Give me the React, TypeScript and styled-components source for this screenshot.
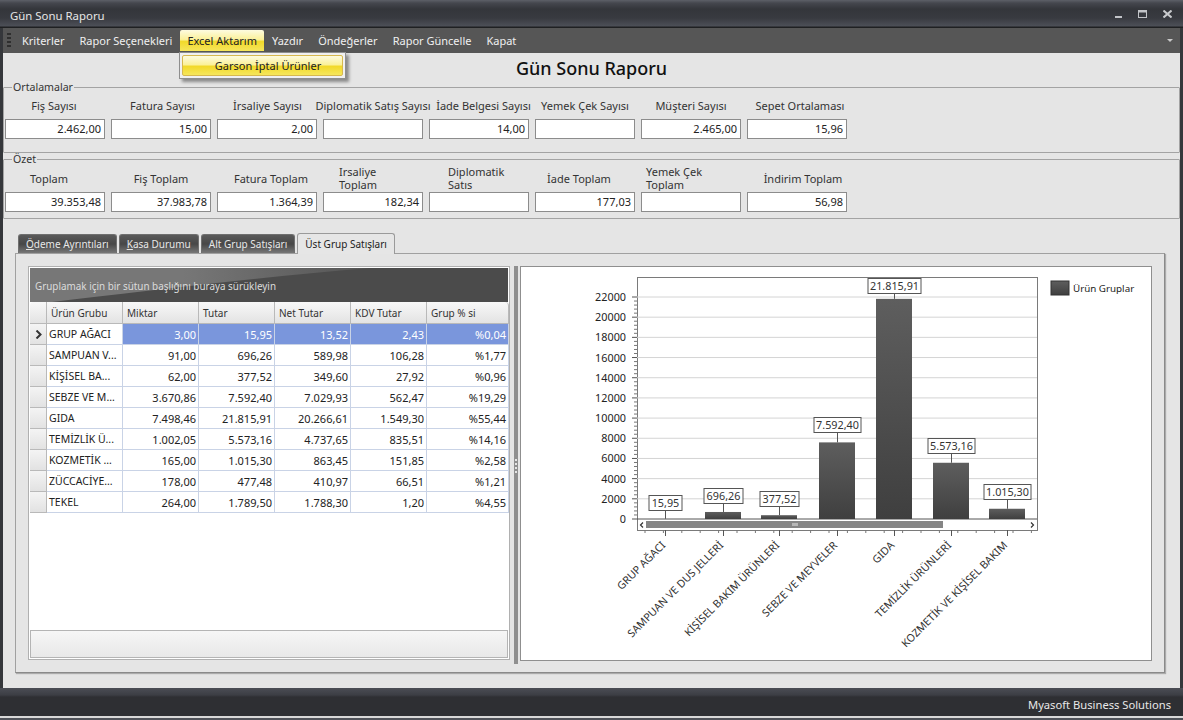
import React from "react";
import styled, { createGlobalStyle } from "styled-components";

const Global = createGlobalStyle`
  html, body { margin: 0; padding: 0; height: 100%; overflow: hidden; background: #2e2f33; }
  * { box-sizing: border-box; }
  #root { width: 1183px; height: 720px; }
`;
const FONT = `"Noto Sans", "DejaVu Sans", sans-serif`;

const Win = styled.div`
  width: 1183px; height: 720px; display: flex; flex-direction: column;
  font: 11px ${FONT}; color: #222; background: #35373b; padding: 0 3px;
  border-bottom: 2px solid #4f5259; overflow: hidden;
`;
const TitleBar = styled.div`
  height: 28px; margin: 0 -3px; padding: 2px 11px 0 10px; display: flex; align-items: center;
  justify-content: space-between; flex: none; color: #e6e6e6; font-size: 11.4px;
  background: linear-gradient(#5d6068 0, #45474e 3px, #34363b 9px, #383a40 18px, #4c4f57 26px, #1f2022 27px);
`;
const WinButtons = styled.div` display: flex; align-items: center; gap: 16px; margin-top: -3px; `;
const MinIcon = styled.svg` margin-top: 6px; `;
const MenuBar = styled.div`
  height: 25px; flex: none; display: flex; align-items: center; gap: 1px; padding: 0 5px 0 4px;
  background: #565656; color: #f0f0f0; position: relative;
`;
const Grip = styled.div`
  width: 4px; height: 15px; margin-right: 3px;
  background: repeating-linear-gradient(#2f2f2f 0 2px, transparent 2px 4px);
`;
const MenuItem = styled.div<{ $on?: boolean }>`
  height: 21px; padding: 0 7px; display: flex; align-items: center; white-space: nowrap; margin-top: -1px;
  border-radius: 2px 2px 0 0;
  ${p => p.$on ? `color:#222; background: linear-gradient(#fdfbe0 0,#fbf19a 45%,#f2d92a 55%,#f6e65c 100%);` : ``}
`;
const Overflow = styled.div`
  margin-left: auto; width: 0; height: 0; margin-right: 2px;
  border-left: 3px solid transparent; border-right: 3px solid transparent; border-top: 3px solid #c8c8c8;
`;
const Popup = styled.div`
  position: absolute; left: 176px; top: 24px; width: 167px; height: 27px; background: #f0f0f0;
  border: 1px solid #8e8e8e; padding: 2px; box-shadow: 3px 3px 3px rgba(0,0,0,.4); z-index: 5;
`;
const PopupItem = styled.div`
  height: 21px; display: flex; align-items: center; justify-content: center; color: #222; padding-left: 11px;
  border: 1px solid #d7b84e; border-radius: 2px;
  background: linear-gradient(#fdfbe0 0,#fbf19a 45%,#f2d92a 55%,#f6e65c 100%);
`;
const Content = styled.div`
  flex: 1; min-height: 0; background: #e5e5e5; display: flex; flex-direction: column; padding: 0;
`;
const Heading = styled.h1`
  margin: 0; height: 28px; flex: none; text-align: center; font: 500 18px/28px ${FONT}; color: #111; padding-top: 1px;
`;
const Group = styled.fieldset<{ $h: number }>`
  margin: 0; height: ${p => p.$h}px; padding: 0 0 0 1px; border: 1px solid #a3a3a3; flex: none;
  min-width: 0; border-radius: 1px;
  legend { padding: 0 1px; margin-left: 7px; line-height: 12px; color: #333; font-size: 10.6px; }
`;
const Fields = styled.div<{ $w?: boolean }>`
  display: grid; grid-template-columns: repeat(8, 100px); column-gap: 6px;
  grid-template-rows: ${p => p.$w ? "26px 20px" : "24px 20px"};
  row-gap: ${p => p.$w ? "1px" : "2px"};
`;
const FieldLabel = styled.div<{ $wrap?: boolean; $pad: number }>`
  display: flex; align-items: center; color: #333; line-height: 13px; height: 100%;
  ${p => p.$wrap
    ? `justify-content: flex-start; text-align: left; white-space: normal; overflow: hidden; padding: 0 18px 0 ${p.$pad}px;`
    : `justify-content: center; white-space: nowrap; ${p.$pad < 0 ? `padding-right: ${-p.$pad}px;` : `padding-left: ${p.$pad}px;`}`}
`;
const FieldBox = styled.div`
  height: 20px; background: #fff; border: 1px solid #8c8c8c; text-align: right; padding: 0 3px; line-height: 18px; color: #222;
`;
const Gap = styled.div<{ $h: number }>` height: ${p => p.$h}px; flex: none; `;
const TabRow = styled.div`
  display: flex; gap: 2px; padding-left: 15px; height: 20px; flex: none; align-items: flex-end; position: relative; z-index: 1; font-size: 10px;
`;
const Tab = styled.div<{ $on?: boolean }>`
  height: ${p => p.$on ? 21 : 19}px; padding: 0 7px; display: flex; align-items: center; border-radius: 3px 3px 0 0;
  margin-bottom: ${p => p.$on ? -1 : 0}px; border: 1px solid ${p => p.$on ? "#9a9a9a" : "#6f6f6f"}; border-bottom: 0;
  ${p => p.$on ? "background: #e6e6e6; color:#222;" : "background: linear-gradient(#5a5a5a,#474747 50%,#777); color:#e8e8e8;"}
  u { text-decoration: underline; }
`;
const TabPanel = styled.div`
  margin: 0 15px 0 12px; height: 420px; flex: none; border: 1px solid #a0a0a0; border-right-color: #8a8a8a; border-bottom-color: #8a8a8a;
  box-shadow: 1px 1px 1px rgba(0,0,0,.25); padding: 12px 13px 12px 12px; display: flex; background: #e5e5e5;
`;
const GridBox = styled.div`
  width: 482px; flex: none; height: 394px; border: 1px solid #b0b0b0; background: #fff; display: flex; flex-direction: column; padding: 1px;
`;
const GroupBar = styled.div`
  height: 34px; flex: none; color: #dcdcdc; padding: 11px 0 0 5px; font-size: 9.9px; position: relative; overflow: hidden; background: #4b4b4b;
  span { position: relative; }
`;
const GroupSwoosh = styled.svg` position: absolute; inset: 0; width: 100%; height: 100%; `;
const TableTop = styled.div` flex: none; background: #4b4b4b; `;
const Table = styled.table`
  border-collapse: separate; border-spacing: 0; table-layout: fixed; width: 479px; background: #fff;
  th { height: 22px; font-weight: 400; font-size: 10px; text-align: left; padding: 0 4px; color: #333; background: linear-gradient(#f8f8f8,#e3e3e3); border-right: 1px solid #b9b9b9; border-bottom: 1px solid #b9b9b9; }
  th:first-child { border-top-left-radius: 4px; }
  th:last-child { border-top-right-radius: 4px; }
  td { height: 21px; padding: 0 2px; text-align: right; border-right: 1px solid #c9d3e6; border-bottom: 1px solid #c9d3e6; color: #222; white-space: nowrap; overflow: hidden; }
`;
const Indicator = styled.td`
  && { background: linear-gradient(#f4f4f4,#e2e2e2); border-right: 1px solid #b9b9b9; border-bottom: 1px solid #b9b9b9; padding: 0; text-align: center; }
`;
const NameCell = styled.td` && { text-align: left; font-size: 10.5px; } `;
const Row = styled.tr<{ $sel?: boolean }>`
  ${p => p.$sel ? `td:not(:first-child):not(:nth-child(2)) { background: #7a96dc; color: #fff; }` : ""}
`;
const GridFill = styled.div` flex: 1; min-height: 0; `;
const GridFooter = styled.div`
  height: 28px; flex: none; border: 1px solid #b4b4b4; background: linear-gradient(#f6f6f6,#e8e8e8);
`;
const Splitter = styled.div`
  width: 4px; height: 398px; margin: 0 2px 0 4px; flex: none; background: #8f8f8f; position: relative;
  &::after { content: ""; position: absolute; left: 1px; top: 193px; width: 2px; height: 14px;
    background: repeating-linear-gradient(#e5e5e5 0 2px, #8f8f8f 2px 4px); }
`;
const ChartBox = styled.div`
  width: 632px; height: 395px; flex: none; background: #fff; border: 1px solid #8f8f8f;
`;
const ChartSvg = styled.svg` display: block; font-family: ${FONT}; `;
const StatusBar = styled.div`
  height: 28px; flex: none; margin: 0 -3px; display: flex; align-items: center; justify-content: flex-end; padding: 5px 12px 0 0;
  color: #e8e8e8; font-size: 11.2px;
  background: linear-gradient(#4b4d55 0,#3c3e44 7px,#2e2f33 9px,#2e2f33 100%);
`;
const BottomEdge = styled.div` height: 2px; flex: none; margin: 0 -3px; background: #d8d8d8; `;

const avg: [string, string, number][] = [["Fiş Sayısı","2.462,00",-2],["Fatura Sayısı","15,00",3],["İrsaliye Sayısı","2,00",1],["Diplomatik Satış Sayısı","",0],["İade Belgesi Sayısı","14,00",9],["Yemek Çek Sayısı","",0],["Müşteri Sayısı","2.465,00",0],["Sepet Ortalaması","15,96",6]];
const sum: [string, string, number, boolean?][] = [["Toplam","39.353,48",-12],["Fiş Toplam","37.983,78",0],["Fatura Toplam","1.364,39",8],["Irsaliye Toplam","182,34",16,true],["Diplomatik Satıs","",19,true],["İade Toplam","177,03",-12],["Yemek Çek Toplam","",5,true],["İndirim Toplam","56,98",12]];
const rows = [
 ["GRUP AĞACI","3,00","15,95","13,52","2,43","%0,04"],
 ["SAMPUAN V...","91,00","696,26","589,98","106,28","%1,77"],
 ["KİŞİSEL BA...","62,00","377,52","349,60","27,92","%0,96"],
 ["SEBZE VE M...","3.670,86","7.592,40","7.029,93","562,47","%19,29"],
 ["GIDA","7.498,46","21.815,91","20.266,61","1.549,30","%55,44"],
 ["TEMİZLİK Ü...","1.002,05","5.573,16","4.737,65","835,51","%14,16"],
 ["KOZMETİK ...","165,00","1.015,30","863,45","151,85","%2,58"],
 ["ZÜCCACİYE...","178,00","477,48","410,97","66,51","%1,21"],
 ["TEKEL","264,00","1.789,50","1.788,30","1,20","%4,55"],
];
const OX = 521, OY = 267; // chart svg origin in page coordinates
const bars = [
 { x: 665, w: 0, val: 15.95, label: "15,95", ly: 495, lw: 33, name: "GRUP AĞACI" },
 { x: 723, w: 36, val: 696.26, label: "696,26", ly: 488, lw: 39, name: "SAMPUAN VE DUS JELLERİ" },
 { x: 779, w: 36, val: 377.52, label: "377,52", ly: 491, lw: 39, name: "KİŞİSEL BAKIM ÜRÜNLERİ" },
 { x: 837, w: 36, val: 7592.4, label: "7.592,40", ly: 417, lw: 47, name: "SEBZE VE MEYVELER" },
 { x: 894, w: 36, val: 21815.91, label: "21.815,91", ly: 278, lw: 53, name: "GIDA" },
 { x: 951, w: 36, val: 5573.16, label: "5.573,16", ly: 438, lw: 47, name: "TEMİZLİK ÜRÜNLERİ" },
 { x: 1007, w: 36, val: 1015.3, label: "1.015,30", ly: 484, lw: 47, name: "KOZMETİK VE KİŞİSEL BAKIM" },
];
const yOf = (v: number) => 519 - v * (222 / 22000) - OY;

function Chart() {
  const ticks = Array.from({ length: 12 }, (_, i) => i * 2000);
  const minor = Array.from({ length: 56 }, (_, i) => i * 400);
  const xt = Array.from({ length: 22 }, (_, i) => 645 + i * 18.4);
  return (
    <ChartSvg width={630} height={393} viewBox="0 0 630 393">
      <defs>
        <linearGradient id="bar" x1="0" y1="0" x2="0" y2="1"><stop offset="0" stopColor="#5e5e5e" /><stop offset="1" stopColor="#3f3f3f" /></linearGradient>
      </defs>
      <rect x={637 - OX + .5} y={277 - OY + .5} width={400} height={253} fill="#fff" stroke="#7a7a7a" />
      {ticks.map(t => (
        <g key={t}>
          <line x1={637 - OX} x2={1037 - OX} y1={yOf(t)} y2={yOf(t)} stroke={t === 0 ? "#555" : "#d4d4d4"} />
          <line x1={632 - OX} x2={637 - OX} y1={yOf(t)} y2={yOf(t)} stroke="#555" />
          <text x={626 - OX} y={yOf(t) + 4} textAnchor="end" fontSize={10.8} fill="#222">{t}</text>
        </g>
      ))}
      {minor.filter(v => v % 2000 !== 0).map(v => <line key={v} x1={634 - OX} x2={637 - OX} y1={yOf(v)} y2={yOf(v)} stroke="#777" />)}
      {bars.map(b => (
        <g key={b.name}>
          {b.w > 0 && <rect x={b.x - 18 - OX} y={yOf(b.val)} width={b.w} height={519 - OY - yOf(b.val)} fill="url(#bar)" />}
          <line x1={b.x - OX + .5} x2={b.x - OX + .5} y1={b.ly + 15 - OY} y2={yOf(b.val)} stroke="#555" />
          <rect x={b.x - b.lw / 2 - OX + .5} y={b.ly - OY + .5} width={b.lw} height={15} fill="#fff" stroke="#555" />
          <text x={b.x - OX + .5} y={b.ly + 12 - OY} textAnchor="middle" fontSize={10.8} fill="#333">{b.label}</text>
          <line x1={b.x - OX + .5} x2={b.x - OX + .5} y1={530 - OY} y2={536 - OY} stroke="#555" />
          <text transform={`translate(${b.x + 1 - OX} ${546 - OY}) rotate(-45)`} textAnchor="end" fontSize={10.7} fill="#333">{b.name}</text>
        </g>
      ))}
      {xt.map(x => <line key={x} x1={x - OX} x2={x - OX} y1={530 - OY} y2={533 - OY} stroke="#777" />)}
      <rect x={638 - OX} y={520 - OY} width={398} height={9.5} fill="#fff" />
      <rect x={646 - OX} y={521 - OY} width={297} height={7} fill="#858585" />
      <path d={`M${643 - OX} ${522.5 - OY}l-2.5 2.5 2.5 2.5`} fill="none" stroke="#333" strokeWidth={1.2} />
      <path d={`M${1031 - OX} ${522.5 - OY}l2.5 2.5-2.5 2.5`} fill="none" stroke="#333" strokeWidth={1.2} />
      <path d={`M${793 - OX} ${523 - OY}v3m2-3v3m2-3v3`} stroke="#e8e8e8" />
      <rect x={1051 - OX} y={281 - OY} width={18} height={14} fill="url(#bar)" stroke="#333" />
      <text x={1073 - OX} y={292 - OY} fontSize={9.8} fill="#222">Ürün Gruplar</text>
    </ChartSvg>
  );
}

export default function App() {
  return (
    <Win>
      <Global />
      <TitleBar>
        <span>Gün Sonu Raporu</span>
        <WinButtons>
          <MinIcon width={7} height={4} viewBox="0 0 7 4"><rect y={1} width={7} height={2} fill="#c2c4c8" /></MinIcon>
          <svg width={9} height={8} viewBox="0 0 9 8"><rect x={.5} y={.5} width={8} height={7} fill="none" stroke="#c2c4c8" /><rect width={9} height={2.5} fill="#c2c4c8" /></svg>
          <svg width={9} height={8} viewBox="0 0 9 8"><path d="M.5 .5l8 7M8.5 .5l-8 7" stroke="#c8cacd" strokeWidth={2} /></svg>
        </WinButtons>
      </TitleBar>
      <MenuBar>
        <Grip />
        {["Kriterler","Rapor Seçenekleri","Excel Aktarım","Yazdır","Öndeğerler","Rapor Güncelle","Kapat"].map(m => (
          <MenuItem key={m} $on={m === "Excel Aktarım"}>{m}</MenuItem>
        ))}
        <Overflow />
        <Popup><PopupItem>Garson İptal Ürünler</PopupItem></Popup>
      </MenuBar>
      <Content>
        <Heading>Gün Sonu Raporu</Heading>
        <Group $h={72}>
          <legend>Ortalamalar</legend>
          <Fields>
            {avg.map(a => <FieldLabel key={a[0]} $pad={a[2]}>{a[0]}</FieldLabel>)}
            {avg.map(a => <FieldBox key={a[0]}>{a[1]}</FieldBox>)}
          </Fields>
        </Group>
        <Group $h={66}>
          <legend>Özet</legend>
          <Fields $w>
            {sum.map(a => <FieldLabel key={a[0]} $pad={a[2]} $wrap={a[3]}>{a[0]}</FieldLabel>)}
            {sum.map(a => <FieldBox key={a[0]}>{a[1]}</FieldBox>)}
          </Fields>
        </Group>
        <Gap $h={14} />
        <TabRow>
          <Tab><u>Ö</u>deme Ayrıntıları</Tab>
          <Tab><u>K</u>asa Durumu</Tab>
          <Tab>Alt Grup Satışları</Tab>
          <Tab $on>Üst Grup Satışları</Tab>
        </TabRow>
        <TabPanel>
          <GridBox>
            <GroupBar>
              <GroupSwoosh viewBox="0 0 478 34" preserveAspectRatio="none">
                <defs><linearGradient id="sw" x1="0" y1="0" x2="1" y2="0"><stop offset="0" stopColor="#777" /><stop offset=".45" stopColor="#777" /><stop offset="1" stopColor="#555" /></linearGradient></defs>
                <path d="M0 0H340C220 10 110 24 22 34H0Z" fill="url(#sw)" />
              </GroupSwoosh>
              <span>Gruplamak için bir sütun başlığını buraya sürükleyin</span>
            </GroupBar>
            <TableTop>
              <Table>
                <colgroup><col width={17} /><col width={76} /><col width={76} /><col width={76} /><col width={76} /><col width={76} /><col width={82} /></colgroup>
                <thead><tr><th /><th>Ürün Grubu</th><th>Miktar</th><th>Tutar</th><th>Net Tutar</th><th>KDV Tutar</th><th>Grup % si</th></tr></thead>
                <tbody>
                  {rows.map((r, i) => (
                    <Row key={r[0]} $sel={i === 0}>
                      <Indicator>{i === 0 && <svg width={7} height={9} viewBox="0 0 7 9"><path d="M1.5 .5l4 4-4 4" fill="none" stroke="#333" strokeWidth={2} /></svg>}</Indicator>
                      <NameCell>{r[0]}</NameCell>
                      {r.slice(1).map((c, j) => <td key={j}>{c}</td>)}
                    </Row>
                  ))}
                </tbody>
              </Table>
            </TableTop>
            <GridFill />
            <GridFooter />
          </GridBox>
          <Splitter />
          <ChartBox><Chart /></ChartBox>
        </TabPanel>
      </Content>
      <StatusBar>Myasoft Business Solutions</StatusBar>
      <BottomEdge />
    </Win>
  );
}
